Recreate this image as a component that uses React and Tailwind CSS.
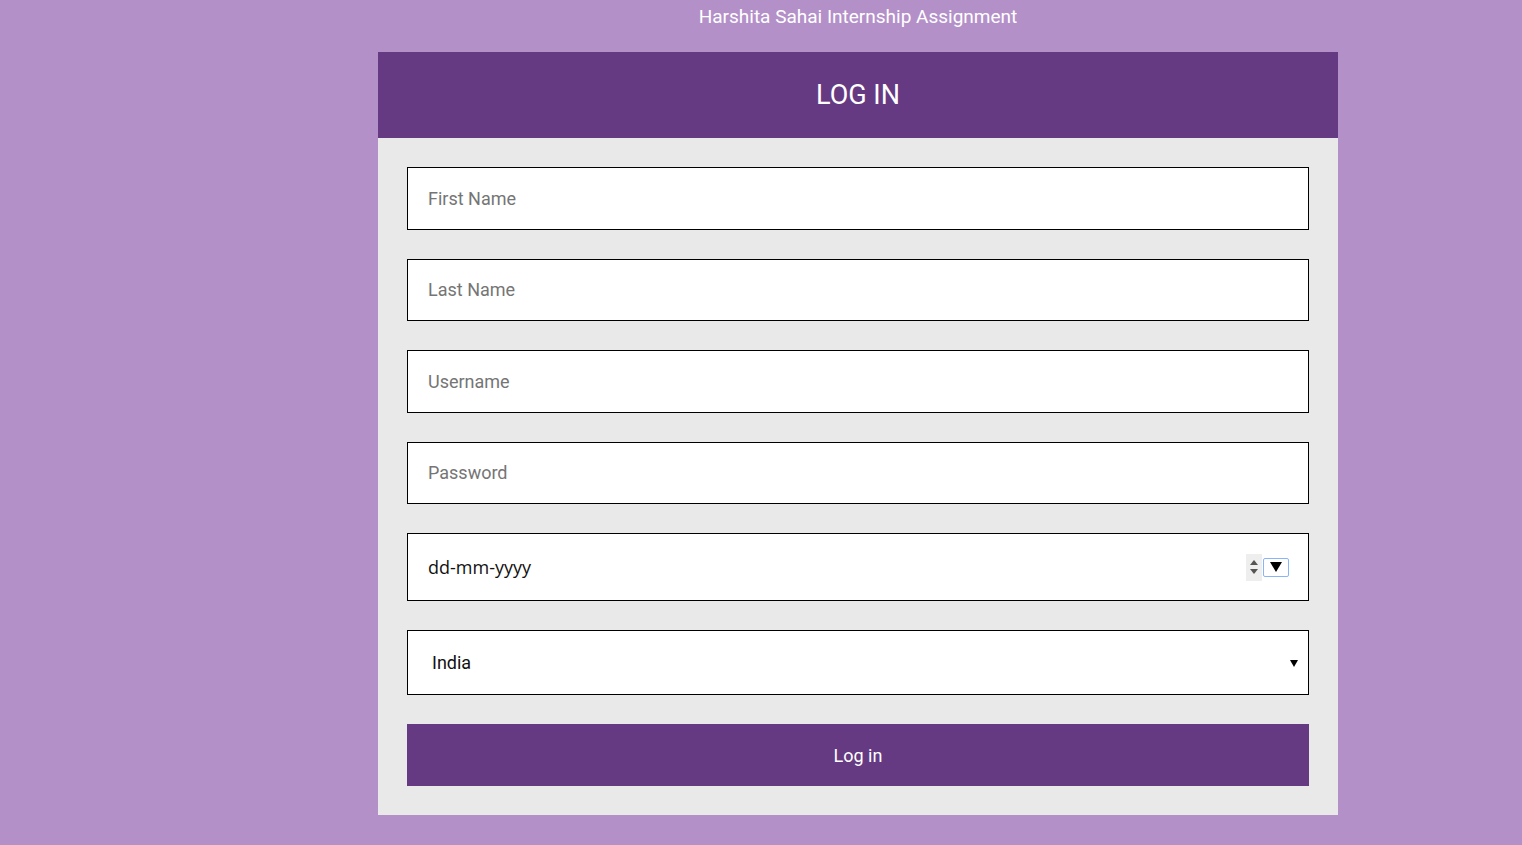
import React from 'react';

function Field({ placeholder }) {
  return (
    <input
      type="text"
      placeholder={placeholder}
      className="w-full h-[62.5px] border border-black bg-white px-5 text-[18px] text-black placeholder:text-[#757575] outline-none"
    />
  );
}

export default function App() {
  return (
    <div className="min-h-[845px] bg-[#b490c9] font-['Roboto',sans-serif]">
      <div className="ml-[378px] w-[960px] flex flex-col">
        <div className="h-[52px] pt-[3px] text-center text-[19px] text-white">Harshita Sahai Internship Assignment</div>

        <div className="h-[86px] bg-[#663a82] flex items-center justify-center">
          <h1 className="text-[27px] text-white">LOG IN</h1>
        </div>

        <form className="bg-[#e9e9e9] px-[29px] py-[29px] flex flex-col gap-[29px]">
          <Field placeholder="First Name" />
          <Field placeholder="Last Name" />
          <Field placeholder="Username" />
          <Field placeholder="Password" />

          {/* date field */}
          <div className="h-[68px] border border-black bg-white flex items-center pl-5 pr-[19px]">
            <span className="flex-1 text-[18px] text-[#111] font-['Open_Sans',sans-serif]">dd-mm-yyyy</span>
            <div className="w-[16px] h-[27px] bg-[#eeeeee] flex flex-col items-center justify-center gap-[4px]">
              <svg width="8" height="5" viewBox="0 0 8 5"><path d="M0 5 L4 0 L8 5 Z" fill="#555" /></svg>
              <svg width="8" height="5" viewBox="0 0 8 5"><path d="M0 0 L4 5 L8 0 Z" fill="#555" /></svg>
            </div>
            <div className="ml-[1px] w-[26px] h-[19px] border border-[#8ab4f8] rounded-[2px] flex items-center justify-center">
              <svg width="12" height="10" viewBox="0 0 12 10"><path d="M0 0 L12 0 L6 10 Z" fill="#000" /></svg>
            </div>
          </div>

          {/* country select */}
          <div className="h-[65px] border border-black bg-white flex items-center pl-6 pr-[10px]">
            <span className="flex-1 text-[18px] text-[#111]">India</span>
            <svg width="8" height="8" viewBox="0 0 8 8"><path d="M0 1 L8 1 L4 8 Z" fill="#000" /></svg>
          </div>

          <button type="button" className="h-[62px] bg-[#663a82] text-white text-[18px]">Log in</button>
        </form>
      </div>
    </div>
  );
}
